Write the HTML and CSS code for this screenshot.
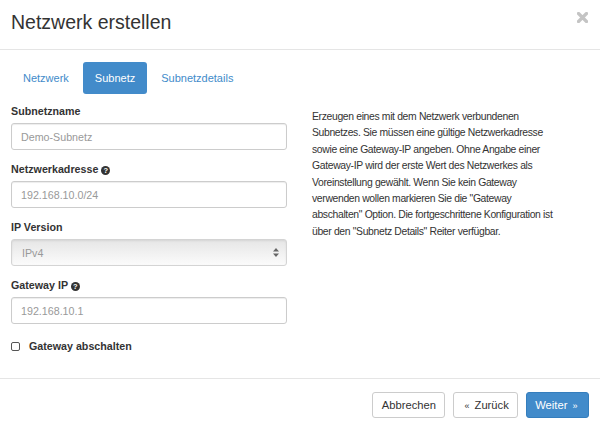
FILE: index.html
```html
<!DOCTYPE html>
<html lang="de">
<head>
<meta charset="utf-8">
<title>Netzwerk erstellen</title>
<link rel="stylesheet" href="styles.css">
</head>
<body>
<div class="modal">
  <div class="modal-header">
    <h3 class="modal-title">Netzwerk erstellen</h3>
    <span class="close" aria-label="Schließen">
      <svg width="11" height="11" viewBox="0 0 11 11"><path d="M1.5 1.5 L9.5 9.5 M9.5 1.5 L1.5 9.5" stroke="#c4c4c4" stroke-width="3.2" stroke-linecap="round"/></svg>
    </span>
  </div>
  <div class="modal-body">
    <ul class="nav-pills">
      <li><a class="pill">Netzwerk</a></li>
      <li><a class="pill active">Subnetz</a></li>
      <li><a class="pill">Subnetzdetails</a></li>
    </ul>
    <div class="tab-content">
      <div class="form-col">
        <div class="form-group">
          <label class="control-label">Subnetzname</label>
          <input class="form-control" type="text" placeholder="Demo-Subnetz">
        </div>
        <div class="form-group">
          <label class="control-label">Netzwerkadresse <span class="help">?</span></label>
          <input class="form-control" type="text" placeholder="192.168.10.0/24">
        </div>
        <div class="form-group">
          <label class="control-label">IP Version</label>
          <div class="select">
            <span>IPv4</span>
            <svg class="arrows" width="6" height="9" viewBox="0 0 6 9"><path d="M3 0 L6 3.5 L0 3.5 Z M3 9 L6 5.5 L0 5.5 Z" fill="#666"/></svg>
          </div>
        </div>
        <div class="form-group">
          <label class="control-label">Gateway IP <span class="help">?</span></label>
          <input class="form-control" type="text" placeholder="192.168.10.1">
        </div>
        <div class="checkbox">
          <input type="checkbox" class="check">
          <span class="check-label">Gateway abschalten</span>
        </div>
      </div>
      <div class="help-col">
        <p>Erzeugen eines mit dem Netzwerk verbundenen<br>Subnetzes. Sie müssen eine gültige Netzwerkadresse<br>sowie eine Gateway-IP angeben. Ohne Angabe einer<br>Gateway-IP wird der erste Wert des Netzwerkes als<br>Voreinstellung gewählt. Wenn Sie kein Gateway<br>verwenden wollen markieren Sie die "Gateway<br>abschalten" Option. Die fortgeschrittene Konfiguration ist<br>über den "Subnetz Details" Reiter verfügbar.</p>
      </div>
    </div>
  </div>
  <div class="modal-footer">
    <button class="btn">Abbrechen</button>
    <button class="btn"><span class="raquo">«</span> Zurück</button>
    <button class="btn btn-primary">Weiter <span class="raquo">»</span></button>
  </div>
</div>
</body>
</html>
```
FILE: styles.css
```css
* { box-sizing: border-box; }
html, body {
  margin: 0;
  padding: 0;
  background: #fff;
}
body {
  font-family: "Liberation Sans", Arial, Helvetica, sans-serif;
  font-size: 11px;
  line-height: 16px;
  color: #333;
}
.modal {
  width: 600px;
}
.modal-header {
  display: flex;
  justify-content: space-between;
  align-items: flex-start;
  padding: 12px 12px 16px 11px;
  border-bottom: 1px solid #e5e5e5;
}
.modal-title {
  margin: 0;
  font-size: 19.5px;
  line-height: 21px;
  font-weight: normal;
  color: #333;
}
.close {
  display: block;
  width: 11px;
  height: 11px;
  margin-top: 0;
}
.close svg { display: block; }
.modal-body {
  padding: 12px 11px 12px 11px;
}
.nav-pills {
  display: flex;
  gap: 2px;
  list-style: none;
  margin: 0;
  padding: 0;
}
.pill {
  display: block;
  padding: 8px 12px;
  line-height: 16px;
  border-radius: 3px;
  color: #428bca;
}
.pill.active {
  background: #428bca;
  color: #fff;
}
.tab-content {
  display: grid;
  grid-template-columns: 276px 277px;
  column-gap: 25px;
  margin-top: 9px;
}
.form-group {
  margin-bottom: 11px;
}
.control-label {
  display: block;
  font-weight: bold;
  font-size: 10.7px;
  line-height: 16px;
  margin-bottom: 4px;
}
.help {
  display: inline-block;
  width: 9px;
  height: 9px;
  border-radius: 50%;
  background: #333;
  color: #fff;
  font-size: 7.5px;
  line-height: 9px;
  text-align: center;
  vertical-align: 0px;
  font-weight: bold;
}
.form-control {
  display: block;
  width: 100%;
  height: 27px;
  padding: 5px 9px;
  font-family: inherit;
  font-size: 10.7px;
  color: #555;
  border: 1px solid #ccc;
  border-radius: 3px;
  box-shadow: inset 0 1px 1px rgba(0,0,0,0.075);
  outline: none;
}
.form-control::placeholder { color: #999; }
.select {
  display: flex;
  align-items: center;
  justify-content: space-between;
  height: 27px;
  padding: 0 7px 0 10px;
  border: 1px solid #d4d4d4;
  border-radius: 3px;
  background: linear-gradient(#e6e6e6, #fbfbfb);
  box-shadow: inset 0 1px 2px rgba(0,0,0,0.08);
  color: #999;
  font-size: 10.7px;
}
.arrows { display: block; }
.checkbox {
  display: flex;
  align-items: center;
  padding-top: 3px;
  line-height: 16px;
  margin-bottom: 12px;
}
.check {
  appearance: none;
  -webkit-appearance: none;
  width: 9px;
  height: 9px;
  margin: 0 9px 0 0;
  border: 1px solid #555;
  border-radius: 2px;
  background: #fff;
}
.check-label {
  font-weight: bold;
  font-size: 10.7px;
}
.help-col p {
  margin: 6px 0 0 0;
  font-size: 10.4px;
  letter-spacing: -0.35px;
  line-height: 16.4px;
  white-space: nowrap;
}
.modal-footer {
  display: flex;
  justify-content: flex-end;
  gap: 7.5px;
  padding: 13px 11px 12px 11px;
  border-top: 1px solid #e5e5e5;
}
.btn {
  font-family: inherit;
  font-size: 11.2px;
  line-height: 16px;
  height: 26px;
  padding: 4px 8.5px;
  border: 1px solid #ccc;
  border-radius: 3px;
  background: #fff;
  color: #333;
}
.btn-primary {
  background: #428bca;
  border-color: #357ebd;
  color: #fff;
}
.raquo {
  font-size: 9px;
  padding: 0 2px;
}
```
